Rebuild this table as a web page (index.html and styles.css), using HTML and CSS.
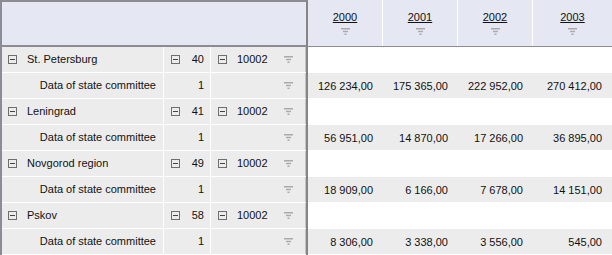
FILE: index.html
```html
<!DOCTYPE html>
<html>
<head>
<meta charset="utf-8">
<link rel="stylesheet" href="styles.css">
</head>
<body>
<svg width="0" height="0" class="defs">
  <defs>
    <symbol id="minus" viewBox="0 0 9 9">
      <rect x="0.5" y="0.5" width="8" height="8" fill="none" stroke="#6e6e6e"/>
      <rect x="2" y="4" width="5" height="1" fill="#444"/>
    </symbol>
    <symbol id="filter" viewBox="0 0 9 7">
      <rect x="0" y="0" width="9" height="1.5" fill="#a9a9a9"/>
      <rect x="2" y="2.8" width="5" height="1.4" fill="#a9a9a9"/>
      <rect x="3.5" y="5.5" width="2" height="1.5" fill="#a9a9a9"/>
    </symbol>
  </defs>
</svg>
<div class="grid">
  <div class="left">
    <div class="corner"></div>
    <div class="lrow group">
      <div class="c name"><svg class="mi"><use href="#minus"/></svg><span>St. Petersburg</span></div>
      <div class="c num"><svg class="mi"><use href="#minus"/></svg><span>40</span></div>
      <div class="c code"><svg class="mi"><use href="#minus"/></svg><span class="cv">10002</span><svg class="fi"><use href="#filter"/></svg></div>
    </div>
    <div class="lrow data">
      <div class="c name"><span>Data of state committee</span></div>
      <div class="c num"><span>1</span></div>
      <div class="c code"><svg class="fi"><use href="#filter"/></svg></div>
    </div>
    <div class="lrow group">
      <div class="c name"><svg class="mi"><use href="#minus"/></svg><span>Leningrad</span></div>
      <div class="c num"><svg class="mi"><use href="#minus"/></svg><span>41</span></div>
      <div class="c code"><svg class="mi"><use href="#minus"/></svg><span class="cv">10002</span><svg class="fi"><use href="#filter"/></svg></div>
    </div>
    <div class="lrow data">
      <div class="c name"><span>Data of state committee</span></div>
      <div class="c num"><span>1</span></div>
      <div class="c code"><svg class="fi"><use href="#filter"/></svg></div>
    </div>
    <div class="lrow group">
      <div class="c name"><svg class="mi"><use href="#minus"/></svg><span>Novgorod region</span></div>
      <div class="c num"><svg class="mi"><use href="#minus"/></svg><span>49</span></div>
      <div class="c code"><svg class="mi"><use href="#minus"/></svg><span class="cv">10002</span><svg class="fi"><use href="#filter"/></svg></div>
    </div>
    <div class="lrow data">
      <div class="c name"><span>Data of state committee</span></div>
      <div class="c num"><span>1</span></div>
      <div class="c code"><svg class="fi"><use href="#filter"/></svg></div>
    </div>
    <div class="lrow group">
      <div class="c name"><svg class="mi"><use href="#minus"/></svg><span>Pskov</span></div>
      <div class="c num"><svg class="mi"><use href="#minus"/></svg><span>58</span></div>
      <div class="c code"><svg class="mi"><use href="#minus"/></svg><span class="cv">10002</span><svg class="fi"><use href="#filter"/></svg></div>
    </div>
    <div class="lrow data">
      <div class="c name"><span>Data of state committee</span></div>
      <div class="c num"><span>1</span></div>
      <div class="c code"><svg class="fi"><use href="#filter"/></svg></div>
    </div>
  </div>
  <div class="right">
    <div class="rhead">
      <div class="h"><span class="yr">2000</span><svg class="fi"><use href="#filter"/></svg></div>
      <div class="h"><span class="yr">2001</span><svg class="fi"><use href="#filter"/></svg></div>
      <div class="h"><span class="yr">2002</span><svg class="fi"><use href="#filter"/></svg></div>
      <div class="h last"><span class="yr">2003</span><svg class="fi"><use href="#filter"/></svg></div>
    </div>
    <div class="rrow group"><div class="v"></div><div class="v"></div><div class="v"></div><div class="v last"></div></div>
    <div class="rrow data"><div class="v">126 234,00</div><div class="v">175 365,00</div><div class="v">222 952,00</div><div class="v last">270 412,00</div></div>
    <div class="rrow group"><div class="v"></div><div class="v"></div><div class="v"></div><div class="v last"></div></div>
    <div class="rrow data"><div class="v">56 951,00</div><div class="v">14 870,00</div><div class="v">17 266,00</div><div class="v last">36 895,00</div></div>
    <div class="rrow group"><div class="v"></div><div class="v"></div><div class="v"></div><div class="v last"></div></div>
    <div class="rrow data"><div class="v">18 909,00</div><div class="v">6 166,00</div><div class="v">7 678,00</div><div class="v last">14 151,00</div></div>
    <div class="rrow group"><div class="v"></div><div class="v"></div><div class="v"></div><div class="v last"></div></div>
    <div class="rrow data"><div class="v">8 306,00</div><div class="v">3 338,00</div><div class="v">3 556,00</div><div class="v last">545,00</div></div>
  </div>
</div>
</body>
</html>
```
FILE: styles.css
```css
html, body {
  margin: 0;
  padding: 0;
  background: #fff;
  overflow: hidden;
}
body {
  font-family: "Liberation Sans", Arial, sans-serif;
  font-size: 11px;
  color: #111;
  width: 612px;
  height: 255px;
}
.defs {
  position: absolute;
  width: 0;
  height: 0;
}
.grid {
  display: flex;
  align-items: flex-start;
}
.left {
  width: 308px;
  flex: none;
  box-sizing: border-box;
  border-left: 2px solid #8c8c94;
  border-right: 2px solid #858585;
  background: #ececec;
}
.corner {
  height: 43px;
  margin-left: -2px;
  margin-right: -2px;
  background: #e5e7f3;
  border-top: 2px solid #8c8c94;
  border-left: 2px solid #8c8c94;
  border-right: 2px solid #858585;
  border-bottom: 2px solid #8c8c94;
}
.lrow {
  display: grid;
  grid-template-columns: 162px 47px 95px;
  height: 26px;
  box-sizing: border-box;
  border-bottom: 1px solid #fff;
}
.c {
  display: flex;
  align-items: center;
  border-right: 1px solid #fff;
  box-sizing: border-box;
  line-height: 13px;
  white-space: nowrap;
}
.c.code {
  border-right: 1px solid #c4c4c4;
}
.mi {
  width: 9px;
  height: 9px;
  flex: none;
}
.fi {
  width: 9px;
  height: 7px;
  flex: none;
}
.group .name {
  padding-left: 6px;
}
.group .name span {
  margin-left: 10px;
}
.data .name {
  justify-content: flex-end;
  padding-right: 7px;
}
.num {
  padding-left: 7px;
  padding-right: 6px;
}
.num span {
  margin-left: auto;
}
.group .code {
  padding-left: 7px;
  padding-right: 12px;
}
.code .cv {
  margin-left: 10px;
}
.code .fi {
  margin-left: auto;
}
.data .code {
  padding-right: 12px;
}
.right {
  flex: 1;
  min-width: 0;
}
.rhead {
  display: flex;
  height: 47px;
  box-sizing: border-box;
  background: #e5e7f3;
  border-bottom: 1px solid #8c8c94;
}
.h {
  width: 75px;
  flex: none;
  box-sizing: border-box;
  border-right: 1px solid #fff;
  display: flex;
  flex-direction: column;
  align-items: center;
  padding-top: 11px;
}
.h.last {
  flex: 1;
  border-right: none;
}
.yr {
  text-decoration: underline;
  line-height: 13px;
  color: #111;
}
.h .fi {
  margin-top: 4px;
}
.rrow {
  display: flex;
  height: 26px;
  box-sizing: border-box;
  border-bottom: 1px solid #fff;
}
.rrow.group {
  background: #fff;
}
.rrow.data {
  background: #ececec;
}
.v {
  width: 75px;
  flex: none;
  box-sizing: border-box;
  display: flex;
  align-items: center;
  justify-content: flex-end;
  padding-right: 10px;
  white-space: nowrap;
}
.v.last {
  flex: 1;
}
```
